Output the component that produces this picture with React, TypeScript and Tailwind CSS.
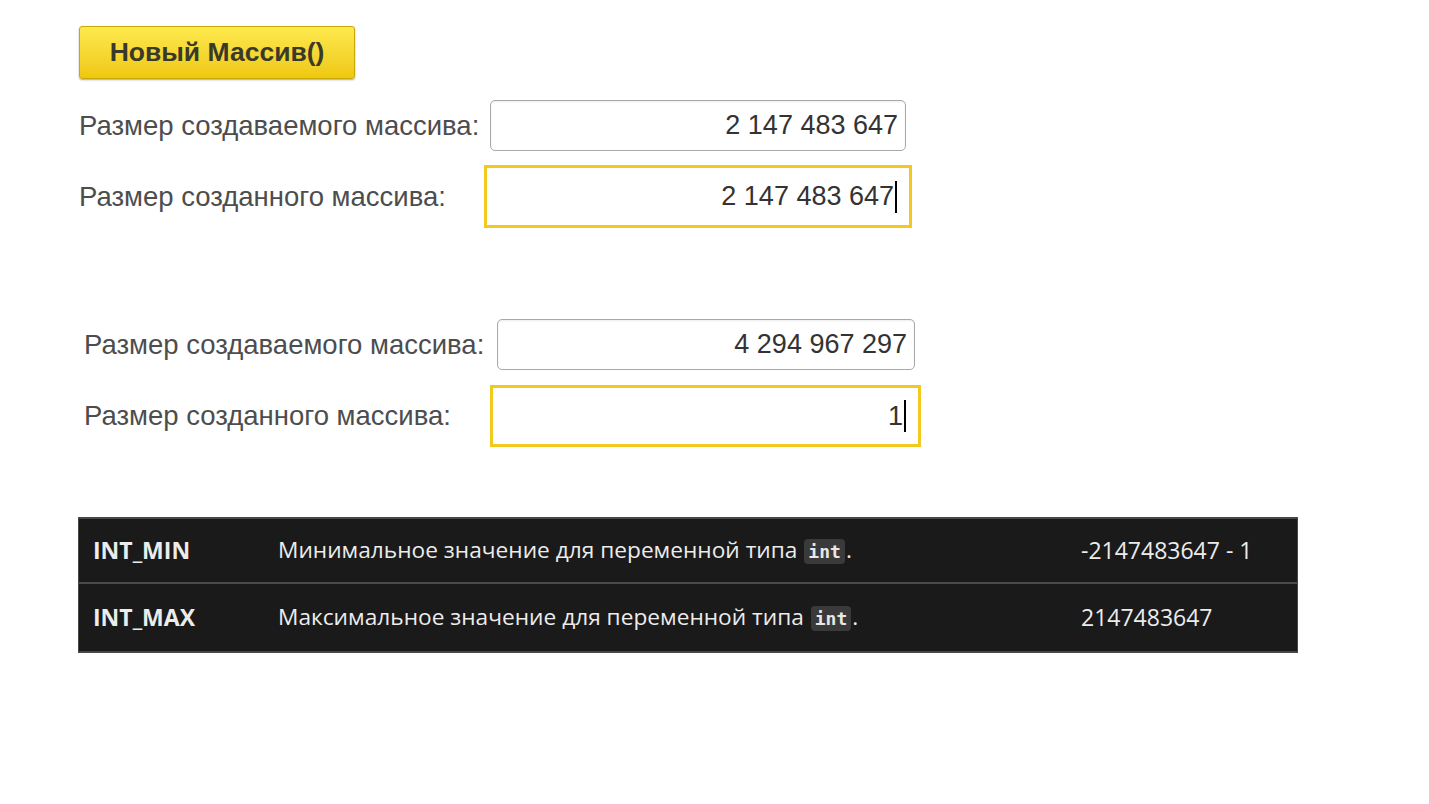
import React from "react";

const labelCls =
  "shrink-0 text-[27.5px] leading-none text-[#4d4d4d] [font-family:'Liberation_Sans',Arial,sans-serif]";
const valCls =
  "text-[27px] leading-none text-[#333] [font-family:'Liberation_Sans',Arial,sans-serif]";

function Code() {
  return (
    <code className="mx-[1px] rounded-[4px] bg-[#3a3a3a] px-[4px] py-[2px] text-[18px] font-bold text-[#e8e8e8] [font-family:'DejaVu_Sans_Mono',monospace]">
      int
    </code>
  );
}

export default function App() {
  return (
    <div className="min-h-[804px] w-[1429px] bg-white pl-[79px] pt-[26px]">
      <button className="flex h-[53px] w-[276px] items-center justify-center rounded-[3px] border border-[#c9a90a] bg-gradient-to-b from-[#fde94c] to-[#efc80a] text-[26.5px] font-bold text-[#3a3a2a] shadow-[0_1px_2px_rgba(0,0,0,0.35)] [font-family:'Liberation_Sans',Arial,sans-serif]">
        Новый Массив()
      </button>

      {/* group 1 */}
      <div className="mt-[21px] flex items-center">
        <div className={`${labelCls} w-[411px]`}>Размер создаваемого массива:</div>
        <div className="flex h-[51px] w-[416px] items-center justify-end rounded-[5px] border border-[#a9a9a9] pr-[7px] shadow-[inset_0_1px_2px_rgba(0,0,0,0.08)]">
          <span className={valCls}>2 147 483 647</span>
        </div>
      </div>
      <div className="mt-[14px] flex items-center">
        <div className={`${labelCls} w-[405px]`}>Размер созданного массива:</div>
        <div className="flex h-[63px] w-[428px] items-center justify-end border-[3px] border-[#f3c91f] pr-[12px]">
          <span className={valCls}>2 147 483 647</span>
          <span className="ml-[1px] h-[32px] w-[2px] bg-black" />
        </div>
      </div>

      {/* group 2 */}
      <div className="ml-[5px] mt-[91px] flex items-center">
        <div className={`${labelCls} w-[413px]`}>Размер создаваемого массива:</div>
        <div className="flex h-[51px] w-[418px] items-center justify-end rounded-[5px] border border-[#a9a9a9] pr-[7px] shadow-[inset_0_1px_2px_rgba(0,0,0,0.08)]">
          <span className={valCls}>4 294 967 297</span>
        </div>
      </div>
      <div className="ml-[5px] mt-[15px] flex items-center">
        <div className={`${labelCls} w-[406px]`}>Размер созданного массива:</div>
        <div className="flex h-[62px] w-[431px] items-center justify-end border-[3px] border-[#f3c91f] pr-[12px]">
          <span className={valCls}>1</span>
          <span className="ml-[1px] h-[32px] w-[2px] bg-black" />
        </div>
      </div>

      {/* table */}
      <div className="-ml-[1px] mt-[70px] w-[1220px] border-x border-t-2 border-b-2 border-[#474747] bg-[#1a1a1a] text-[23px] text-[#ececec] [font-family:'Open_Sans','Noto_Sans',sans-serif]">
        <div className="flex h-[65px] items-center border-b-2 border-[#4a4a4a]">
          <div className="w-[199px] pl-[14px] font-bold">INT_MIN</div>
          <div className="w-[803px] text-[22.7px]">
            Минимальное значение для переменной типа <Code />.
          </div>
          <div>-2147483647 - 1</div>
        </div>
        <div className="flex h-[67px] items-center">
          <div className="w-[199px] pl-[14px] font-bold">INT_MAX</div>
          <div className="w-[803px] text-[22.7px]">
            Максимальное значение для переменной типа <Code />.
          </div>
          <div>2147483647</div>
        </div>
      </div>
    </div>
  );
}
